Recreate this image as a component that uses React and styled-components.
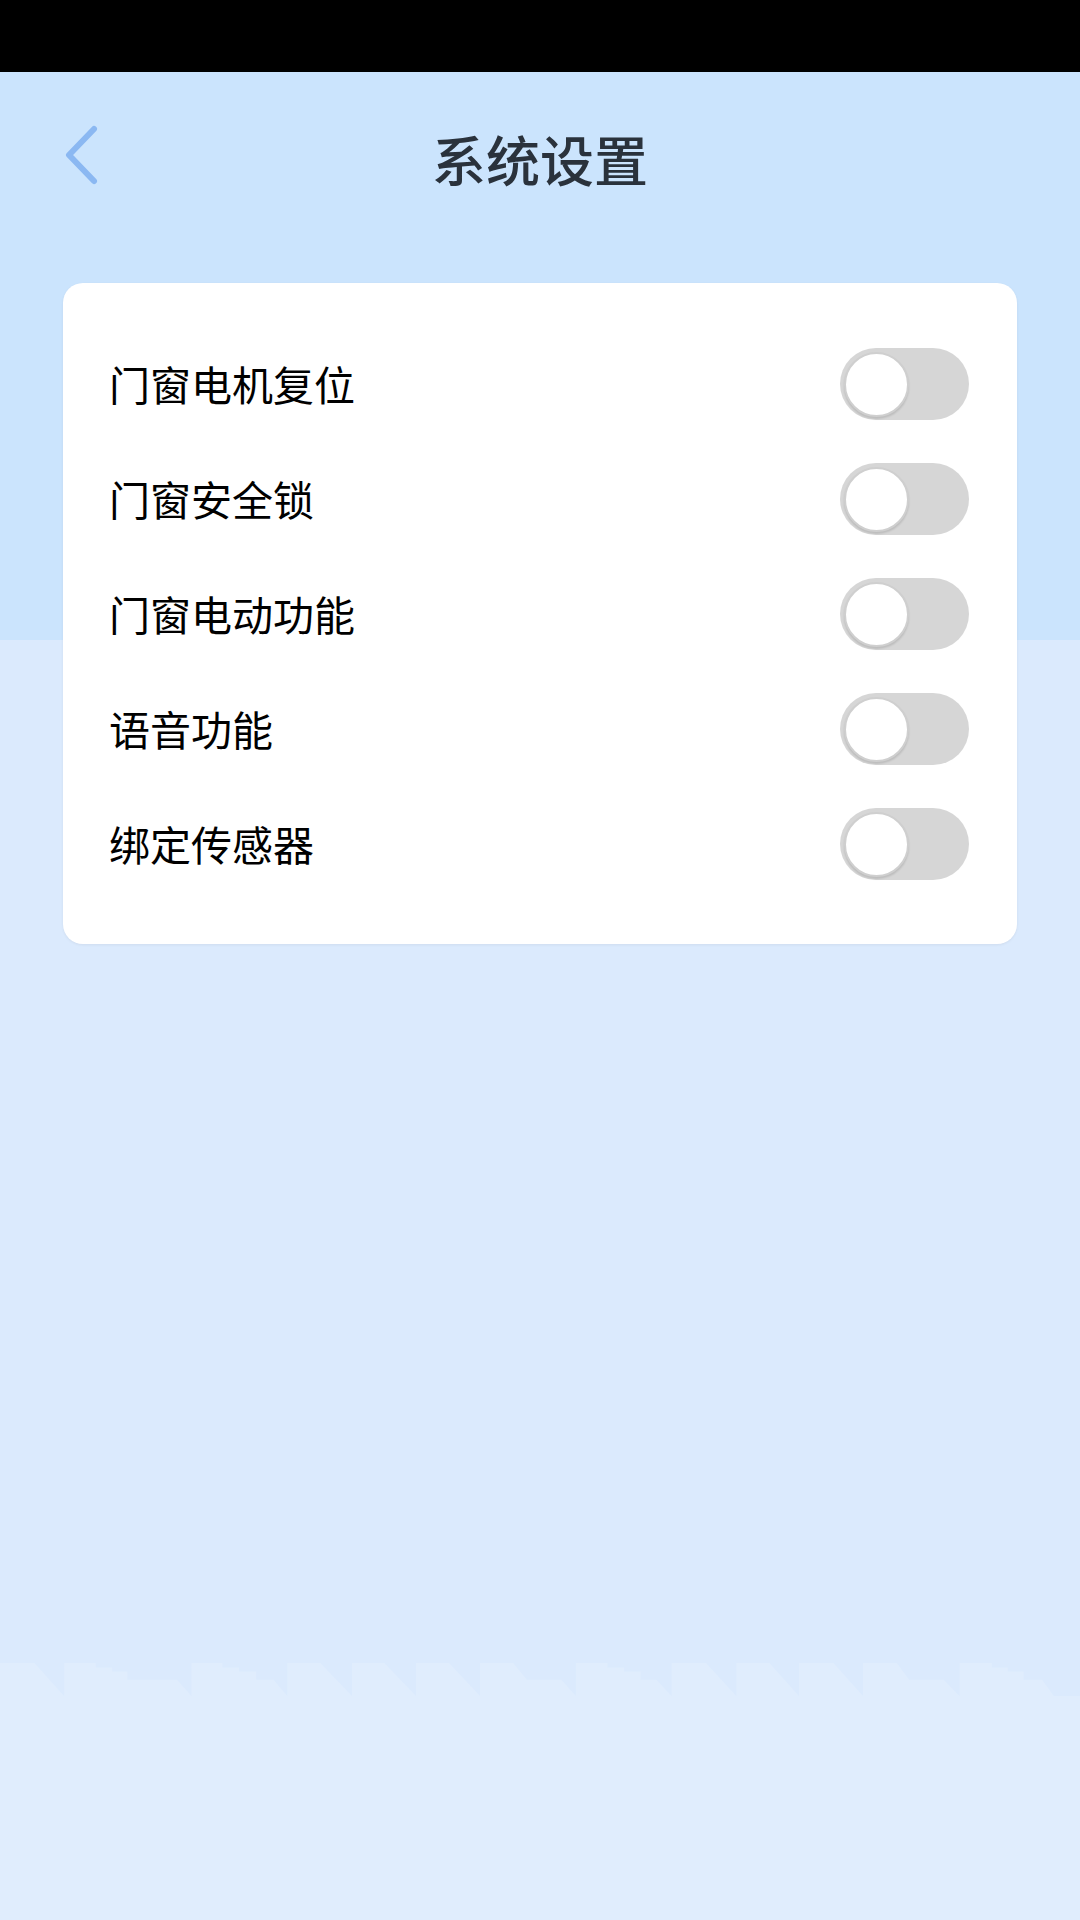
import { useState } from "react";
import styled, { createGlobalStyle } from "styled-components";

const GlobalStyle = createGlobalStyle`
  html, body {
    margin: 0;
    padding: 0;
  }

  body {
    font-family: "Noto Sans CJK SC", "Noto Sans", sans-serif;
  }
`;

const settings = [
  { id: "motor", label: "门窗电机复位" },
  { id: "lock", label: "门窗安全锁" },
  { id: "electric", label: "门窗电动功能" },
  { id: "voice", label: "语音功能" },
  { id: "sensor", label: "绑定传感器" },
];

// skyline along the lower background, traced in a 1568 wide box
const skyline =
  "M0,190 L50,190 L93,288 L93,190 L139,190 L139,203 L163,203 L163,215 L185,215 L185,240 L257,240 L278,288 " +
  "L278,190 L323,190 L323,203 L347,203 L347,215 L372,215 L372,240 L397,240 L417,288 " +
  "L417,190 L465,190 L511,288 L511,190 L558,190 L604,288 L604,190 L652,190 L697,288 " +
  "L697,190 L745,190 L765,240 L815,240 L836,288 " +
  "L836,190 L882,190 L882,203 L906,203 L906,215 L930,215 L930,240 L953,240 L975,288 " +
  "L975,190 L1025,190 L1069,288 L1069,190 L1117,190 L1160,288 L1160,190 L1210,190 L1253,288 " +
  "L1253,190 L1302,190 L1320,240 L1370,240 L1393,288 " +
  "L1393,190 L1440,190 L1440,203 L1463,203 L1463,215 L1486,215 L1486,240 L1513,240 L1530,288 " +
  "L1568,288 L0,288 Z";

const App = () => {
  const [values, setValues] = useState({});

  const toggle = id => setValues(prev => ({ ...prev, [id]: !prev[id] }));

  return (
    <>
      <GlobalStyle />
      <Page>
        <StatusBar />
        <Header>
          <BackButton aria-label="返回">
            <svg width="40" height="64" viewBox="0 0 40 64">
              <path
                d="M31 5 L6 31 L31 57"
                fill="none"
                stroke="#8bb8f2"
                strokeWidth="6"
                strokeLinecap="round"
                strokeLinejoin="round"
              />
            </svg>
          </BackButton>
          <Title>系统设置</Title>
        </Header>
        <Card>
          {settings.map(item => (
            <Row key={item.id}>
              <Label>{item.label}</Label>
              <Switch $on={!!values[item.id]} onClick={() => toggle(item.id)}>
                <Knob />
              </Switch>
            </Row>
          ))}
        </Card>
        <Ground>
          <Skyline viewBox="0 190 1568 98" preserveAspectRatio="none">
            <path d={skyline} fill="#e0edfd" />
          </Skyline>
        </Ground>
      </Page>
    </>
  );
};

const Page = styled.div`
  min-height: 1920px;
  display: flex;
  flex-direction: column;
  background: linear-gradient(
    to bottom,
    #cbe4fd 0,
    #cbe4fd 640px,
    #dbeafd 640px
  );
`;

const StatusBar = styled.div`
  height: 72px;
  background: #000;
`;

const Header = styled.header`
  height: 172px;
  display: grid;
  grid-template-columns: 1fr auto 1fr;
  align-items: center;
  padding: 0 63px;
`;

const BackButton = styled.button`
  justify-self: start;
  padding: 0;
  margin-top: -4px;
  border: none;
  background: none;
  display: flex;
  cursor: pointer;
`;

const Title = styled.h1`
  margin: 0;
  font-size: 54px;
  font-weight: 500;
  color: #2a323c;
`;

const Card = styled.section`
  margin: 39px 63px 0;
  padding: 43px 0;
  background: #fff;
  border-radius: 20px;
  box-shadow: 0 1px 3px rgba(0, 0, 0, 0.06);
`;

const Row = styled.div`
  height: 115px;
  display: flex;
  align-items: center;
  justify-content: space-between;
  padding: 0 48px 0 46px;
`;

const Label = styled.span`
  font-size: 41px;
  color: #000;
  line-height: 1;
`;

const Switch = styled.button`
  width: 129px;
  height: 72px;
  padding: 4px;
  border: none;
  border-radius: 36px;
  display: flex;
  align-items: flex-start;
  justify-content: ${p => (p.$on ? "flex-end" : "flex-start")};
  background: ${p => (p.$on ? "#4cd964" : "#d6d6d6")};
  cursor: pointer;
`;

const Knob = styled.span`
  width: 61px;
  height: 61px;
  border-radius: 50%;
  background: #fff;
  border: 2px solid #cfcfcf;
  box-shadow: 0 2px 2px rgba(0, 0, 0, 0.12);
`;

const Ground = styled.div`
  margin-top: auto;
  height: 257px;
  display: flex;
  flex-direction: column;
  background: #e0edfd;
`;

const Skyline = styled.svg`
  display: block;
  width: 100%;
  height: 33px;
  background: #dbeafd;
`;

export default App;
